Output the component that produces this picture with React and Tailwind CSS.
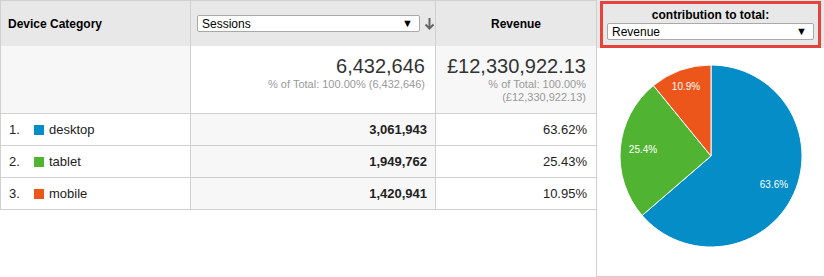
import React from 'react';

const font = { fontFamily: '"Liberation Sans", Arial, sans-serif' };

const rows = [
  { n: '1.', name: 'desktop', color: 'bg-[#058dc7]', sessions: '3,061,943', pct: '63.62%' },
  { n: '2.', name: 'tablet', color: 'bg-[#50b432]', sessions: '1,949,762', pct: '25.43%' },
  { n: '3.', name: 'mobile', color: 'bg-[#ed561b]', sessions: '1,420,941', pct: '10.95%' },
];

// pie slices, clockwise from 12 o'clock; label spots read off the reference
const R = 91;
const slices = [
  { value: 0.636, color: '#058dc7', label: '63.6%', lx: 63, ly: 32 },
  { value: 0.254, color: '#50b432', label: '25.4%', lx: -68, ly: -3 },
  { value: 0.109, color: '#ed561b', label: '10.9%', lx: -25, ly: -66 },
];

const Pie = () => {
  let start = 0;
  const total = slices.reduce((s, x) => s + x.value, 0);
  return (
    <svg width="184" height="184" viewBox="-92 -92 184 184">
      {slices.map((s) => {
        const a0 = (start / total) * Math.PI * 2;
        start += s.value;
        const a1 = (start / total) * Math.PI * 2;
        const x0 = R * Math.sin(a0);
        const y0 = -R * Math.cos(a0);
        const x1 = R * Math.sin(a1);
        const y1 = -R * Math.cos(a1);
        const large = a1 - a0 > Math.PI ? 1 : 0;
        return (
          <g key={s.label}>
            <path
              d={`M0 0 L${x0} ${y0} A${R} ${R} 0 ${large} 1 ${x1} ${y1} Z`}
              fill={s.color}
              stroke="#fff"
              strokeWidth="1"
            />
            <text x={s.lx} y={s.ly} textAnchor="middle" fill="#fff" fontSize="10" style={font}>
              {s.label}
            </text>
          </g>
        );
      })}
    </svg>
  );
};

const Select = ({ label, className }) => (
  <div className={`flex items-center justify-between h-[17px] bg-white border border-[#a9a9a9] rounded-[2px] pl-[4px] pr-[6px] text-[12px] text-black ${className}`}>
    <span>{label}</span>
    <span className="text-[11px] leading-none">▼</span>
  </div>
);

export default function App() {
  return (
    <div className="flex w-[824px] h-[277px] bg-white text-[#222]" style={font}>
      {/* table */}
      <div className="w-[596px] flex flex-col self-start border-l border-t border-[#d0d0d0]">
        {/* header */}
        <div className="flex h-[45px] bg-[#e8e8e8]">
          <div className="w-[190px] border-r border-[#d0d0d0] flex items-center pl-[7px] text-[12px] font-bold text-black">
            Device Category
          </div>
          <div className="w-[245px] border-r border-[#d0d0d0] flex items-center pl-[6px] gap-[4px]">
            <Select label="Sessions" className="w-[223px]" />
            <svg width="11" height="13" viewBox="0 0 11 13">
              <path d="M5.5 1 V11.5 M1.5 7.5 L5.5 11.5 L9.5 7.5" stroke="#666" strokeWidth="2" fill="none" />
            </svg>
          </div>
          <div className="flex-1 flex items-center justify-center text-[12px] font-bold text-black">
            Revenue
          </div>
        </div>

        {/* totals */}
        <div className="flex h-[68px] border-b border-[#d0d0d0]">
          <div className="w-[190px] border-r border-[#d0d0d0] bg-[#f7f7f7]" />
          <div className="w-[245px] border-r border-[#d0d0d0] bg-white flex flex-col items-end pr-[10px] pt-[9px]">
            <div className="text-[20px] leading-[23px] text-[#333]">6,432,646</div>
            <div className="text-[11px] leading-[13px] text-[#999]">% of Total: 100.00% (6,432,646)</div>
          </div>
          <div className="flex-1 bg-[#f7f7f7] flex flex-col items-end pr-[10px] pt-[9px] text-right">
            <div className="text-[20px] leading-[23px] text-[#333]">£12,330,922.13</div>
            <div className="text-[11px] leading-[13px] text-[#999]">% of Total: 100.00%</div>
            <div className="text-[11px] leading-[13px] text-[#999]">(£12,330,922.13)</div>
          </div>
        </div>

        {/* data rows */}
        {rows.map((r) => (
          <div key={r.n} className="flex h-[32px] border-b border-[#d0d0d0] text-[13px]">
            <div className="w-[190px] border-r border-[#d0d0d0] bg-white flex items-center pl-[8px]">
              <span className="w-[25px]">{r.n}</span>
              <span className={`w-[10px] h-[10px] mr-[5px] ${r.color}`} />
              <span>{r.name}</span>
            </div>
            <div className="w-[245px] border-r border-[#d0d0d0] bg-[#f7f7f7] flex items-center justify-end pr-[8px] font-bold">
              {r.sessions}
            </div>
            <div className="flex-1 bg-white flex items-center justify-end pr-[9px]">
              {r.pct}
            </div>
          </div>
        ))}
      </div>

      {/* contribution panel */}
      <div className="w-[228px] h-[277px] border-l border-b border-[#d0d0d0] flex flex-col">
        <div className="bg-[#e8e8e8] h-[48px] px-[3px] pt-[1px]">
          <div className="h-[47px] border-[3px] border-[#e5433b] flex flex-col items-center pt-[4px] px-[4px]">
            <div className="text-[12px] leading-[14px] font-bold text-black">contribution to total:</div>
            <Select label="Revenue" className="w-full mt-[1px]" />
          </div>
        </div>
        <div className="flex justify-center pt-[16px]">
          <Pie />
        </div>
      </div>
    </div>
  );
}
